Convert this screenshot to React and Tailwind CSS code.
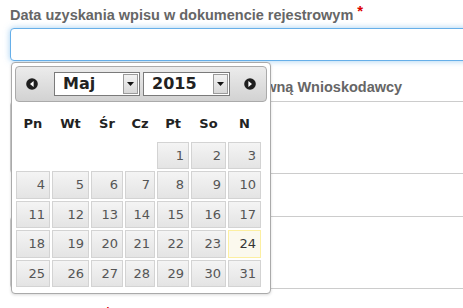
import React from "react";

const weeks = [
  [null, null, null, null, 1, 2, 3],
  [4, 5, 6, 7, 8, 9, 10],
  [11, 12, 13, 14, 15, 16, 17],
  [18, 19, 20, 21, 22, 23, 24],
  [25, 26, 27, 28, 29, 30, 31],
];

const dayNames = ["Pn", "Wt", "Śr", "Cz", "Pt", "So", "N"];

function CircleArrow({ dir }) {
  return (
    <svg width="12" height="12" viewBox="0 0 12 12">
      <circle cx="6" cy="6" r="5.8" fill="#1f1f1f" />
      {dir === "left" ? (
        <polygon points="7.6,3 4,6 7.6,9" fill="#fff" />
      ) : (
        <polygon points="4.4,3 8,6 4.4,9" fill="#fff" />
      )}
    </svg>
  );
}

function FakeSelect({ value, width }) {
  return (
    <div
      className={`flex h-[24px] items-stretch border border-[#7a7a7a] bg-white ${width}`}
    >
      <span className="flex-1 pl-[8px] text-[16px] font-bold leading-[22px] text-[#222]">
        {value}
      </span>
      <span className="my-[1px] mr-[1px] flex w-[15px] items-center justify-center border border-[#9a9a9a] bg-gradient-to-b from-[#f2f2f2] to-[#d8d8d8]">
        <svg width="7" height="4" viewBox="0 0 7 4">
          <polygon points="0,0 7,0 3.5,4" fill="#111" />
        </svg>
      </span>
    </div>
  );
}

function DayCell({ day }) {
  if (!day) return <div />;
  const today = day === 24;
  return (
    <div
      className={
        today
          ? "border border-[#fcefa1] bg-[#fbf9ee] pr-[4px] pt-[5px] text-right text-[#363636]"
          : "border border-[#d3d3d3] bg-gradient-to-b from-[#f4f4f4] to-[#e4e4e4] pr-[4px] pt-[5px] text-right text-[#555]"
      }
    >
      {day}
    </div>
  );
}

function Datepicker() {
  return (
    <div className="absolute left-[11px] top-[62px] w-[260px] rounded-[4px] border border-[#aaa] bg-white p-[3px] pb-[6px] shadow-[0_1px_3px_rgba(0,0,0,0.15)] font-['DejaVu_Sans',sans-serif]">
      <div className="flex h-[36px] items-center rounded-[4px] border border-[#aaa] bg-gradient-to-b from-[#ececec] to-[#d2d2d2] px-[10px]">
        <CircleArrow dir="left" />
        <div className="ml-[16px] flex gap-[3px]">
          <FakeSelect value="Maj" width="w-[86px]" />
          <FakeSelect value="2015" width="w-[87px]" />
        </div>
        <div className="ml-auto">
          <CircleArrow dir="right" />
        </div>
      </div>
      <div className="ml-[1px] grid grid-cols-[34px_37px_32px_30px_32px_35px_33px] gap-x-[2px] text-[13px]">
        {dayNames.map((d) => (
          <div
            key={d}
            className="flex h-[40px] items-center justify-center pt-[3px] font-bold text-[#222]"
          >
            {d}
          </div>
        ))}
      </div>
      <div className="ml-[1px] grid grid-cols-[34px_37px_32px_30px_32px_35px_33px] grid-rows-[27px_28px_27px_28px_27px] gap-x-[2px] gap-y-[2px] text-[13px] leading-[16px]">
        {weeks.flat().map((d, i) => (
          <DayCell key={i} day={d} />
        ))}
      </div>
    </div>
  );
}

export default function App() {
  return (
    <div className="relative h-[308px] w-[463px] overflow-hidden bg-white font-['Liberation_Sans',Arial,sans-serif]">
      <div className="pl-[10px]">
        <label className="block pt-[5px] text-[14.5px] font-bold leading-[20px] text-[#666]">
          Data uzyskania wpisu w dokumencie rejestrowym{" "}
          <span className="relative top-[-4px] text-[15px] text-[#d00]">*</span>
        </label>
        <div className="mt-[3px] h-[33px] w-[480px] rounded-[4px] border border-[#66afe9] bg-white shadow-[0_0_6px_rgba(102,175,233,0.6)]" />

        <label className="mt-[16px] block pl-[3px] text-[14.5px] font-bold leading-[20px] text-[#666]">
          Stan prawny jest zgodny z formą prawną Wnioskodawcy
        </label>
        <div className="mt-[4px] h-[73px] w-[480px] rounded-[4px] border border-[#ccc]" />

        <label className="mt-[12px] block pl-[4px] text-[14.5px] font-bold leading-[20px] text-[#666]">
          Uwagi
        </label>
        <div className="mt-[10px] h-[73px] w-[480px] rounded-[4px] border border-[#ccc]" />

        <label className="mt-[17px] block text-[14.5px] font-bold leading-[20px] text-[#666]">
          <span className="invisible">Numer wpisu</span>{" "}
          <span className="relative top-[-4px] text-[15px] text-[#d00]">*</span>
        </label>
      </div>
      <Datepicker />
    </div>
  );
}
